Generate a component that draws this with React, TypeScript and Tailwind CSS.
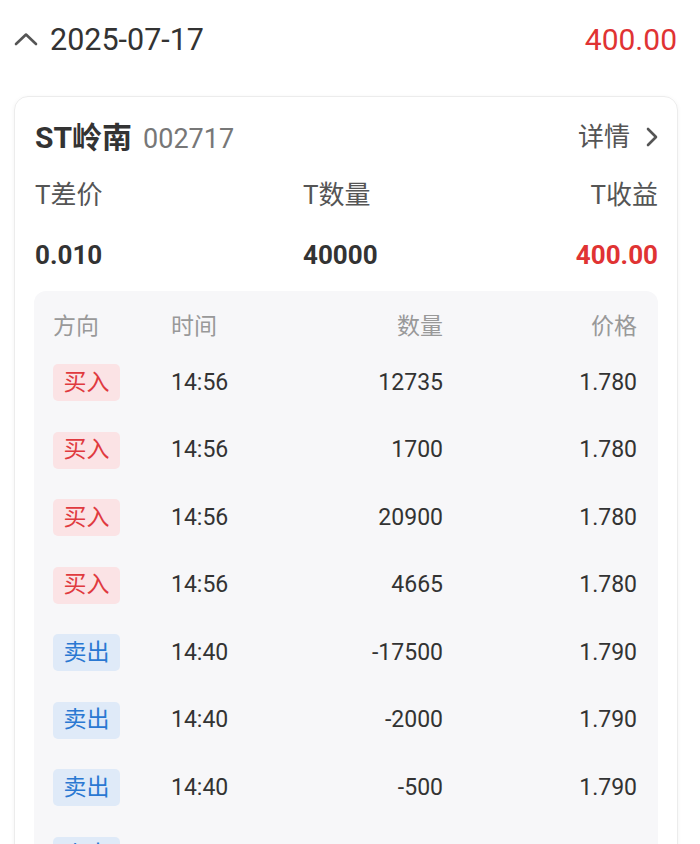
import React from "react";

const FONT = { fontFamily: "Roboto, 'Noto Sans CJK SC', sans-serif" };

type Row = { dir: "buy" | "sell"; time: string; qty: string; price: string };

const rows: Row[] = [
  { dir: "buy", time: "14:56", qty: "12735", price: "1.780" },
  { dir: "buy", time: "14:56", qty: "1700", price: "1.780" },
  { dir: "buy", time: "14:56", qty: "20900", price: "1.780" },
  { dir: "buy", time: "14:56", qty: "4665", price: "1.780" },
  { dir: "sell", time: "14:40", qty: "-17500", price: "1.790" },
  { dir: "sell", time: "14:40", qty: "-2000", price: "1.790" },
  { dir: "sell", time: "14:40", qty: "-500", price: "1.790" },
  { dir: "sell", time: "14:40", qty: "-20000", price: "1.790" },
];

export default function App() {
  return (
    <div className="w-[700px] h-[844px] overflow-hidden bg-white" style={FONT}>
      {/* date header */}
      <div className="h-[80px] flex items-center justify-between pl-[14px] pr-[23px]">
        <div className="flex items-center">
          <svg width="24" height="14" viewBox="0 0 24 14" className="mr-[12px] mt-[-2px]">
            <polyline points="2,12 12,2.5 22,12" fill="none" stroke="#555" strokeWidth="2.6" strokeLinecap="round" strokeLinejoin="round" />
          </svg>
          <span className="text-[30.5px] text-[#333] leading-none">2025-07-17</span>
        </div>
        <span className="text-[30px] text-[#e03333] leading-none">400.00</span>
      </div>

      {/* card */}
      <div className="mt-[16px] ml-[14px] w-[664px] rounded-[14px] border border-[#ececec] shadow-[0_1px_4px_rgba(0,0,0,0.05)] px-[19px] pb-[20px]">
        <div className="mt-[12px] h-[56px] flex items-center justify-between">
          <div className="flex items-baseline pl-[1px]">
            <span className="text-[30px] font-bold text-[#333]">ST岭南</span>
            <span className="ml-[11px] text-[27px] text-[#777]">002717</span>
          </div>
          <div className="flex items-center text-[26px] text-[#555]">
            <span>详情</span>
            <svg width="14" height="20" viewBox="0 0 14 20" className="ml-[14px]">
              <polyline points="4,2 12,10 4,18" fill="none" stroke="#555" strokeWidth="2.6" strokeLinecap="round" strokeLinejoin="round" />
            </svg>
          </div>
        </div>

        <div className="h-[60px] flex items-center text-[26px] text-[#555] pl-[1px]">
          <span className="w-[268px]">T差价</span>
          <span className="flex-1">T数量</span>
          <span>T收益</span>
        </div>
        <div className="h-[60px] flex items-center text-[26px] font-bold pl-[1px]">
          <span className="w-[268px] text-[#333]">0.010</span>
          <span className="flex-1 text-[#333]">40000</span>
          <span className="text-[#e03333]">400.00</span>
        </div>

        {/* trade table */}
        <div className="mt-[6px] bg-[#f7f7f9] rounded-[12px] pl-[19px] pr-[21px] pt-[15px] pb-[10px]">
          <div className="h-[43px] grid grid-cols-[118px_120px_152px_1fr] items-center text-[23px] text-[#999]">
            <span>方向</span>
            <span>时间</span>
            <span className="text-right">数量</span>
            <span className="text-right">价格</span>
          </div>
          {rows.map((r, i) => (
            <div key={i} className="h-[67.5px] grid grid-cols-[118px_120px_152px_1fr] items-center text-[23px] text-[#333]">
              <span>
                {r.dir === "buy" ? (
                  <span className="inline-flex items-center justify-center w-[67px] h-[37px] rounded-[5px] bg-[#fbe3e5] text-[#e03a3f]">买入</span>
                ) : (
                  <span className="inline-flex items-center justify-center w-[67px] h-[37px] rounded-[5px] bg-[#dfeaf8] text-[#2a78d2]">卖出</span>
                )}
              </span>
              <span>{r.time}</span>
              <span className="text-right">{r.qty}</span>
              <span className="text-right">{r.price}</span>
            </div>
          ))}
        </div>
      </div>
    </div>
  );
}
